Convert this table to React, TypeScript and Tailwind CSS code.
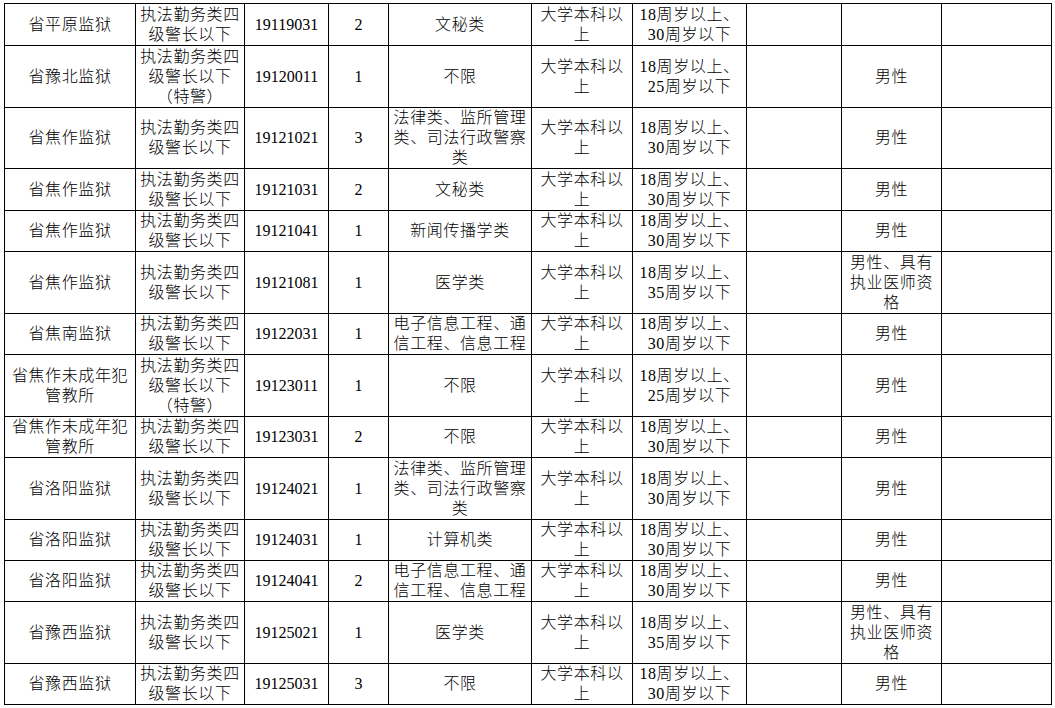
const WIDTHS = [131, 109, 84, 60, 143, 101, 114, 95, 100, 110];

const RANK = ['执法勤务类四', '级警长以下'];
const RANK_SP = ['执法勤务类四', '级警长以下', '（特警）'];
const EDU = ['大学本科以', '上'];
const AGE30 = ['18周岁以上、', '30周岁以下'];
const AGE25 = ['18周岁以上、', '25周岁以下'];
const AGE35 = ['18周岁以上、', '35周岁以下'];
const LAW = ['法律类、监所管理', '类、司法行政警察', '类'];
const ELEC = ['电子信息工程、通', '信工程、信息工程'];
const DOC = ['男性、具有', '执业医师资', '格'];
const MALE = ['男性'];

type Row = {
  h: string;
  unit: string[];
  rank: string[];
  code: string;
  count: string;
  major: string[];
  edu: string[];
  age: string[];
  note: string[];
};

const ROWS: Row[] = [
  { h: 'h-[42px]', unit: ['省平原监狱'], rank: RANK, code: '19119031', count: '2', major: ['文秘类'], edu: EDU, age: AGE30, note: [] },
  { h: 'h-[62px]', unit: ['省豫北监狱'], rank: RANK_SP, code: '19120011', count: '1', major: ['不限'], edu: EDU, age: AGE25, note: MALE },
  { h: 'h-[61px]', unit: ['省焦作监狱'], rank: RANK, code: '19121021', count: '3', major: LAW, edu: EDU, age: AGE30, note: MALE },
  { h: 'h-[42px]', unit: ['省焦作监狱'], rank: RANK, code: '19121031', count: '2', major: ['文秘类'], edu: EDU, age: AGE30, note: MALE },
  { h: 'h-[41px]', unit: ['省焦作监狱'], rank: RANK, code: '19121041', count: '1', major: ['新闻传播学类'], edu: EDU, age: AGE30, note: MALE },
  { h: 'h-[62px]', unit: ['省焦作监狱'], rank: RANK, code: '19121081', count: '1', major: ['医学类'], edu: EDU, age: AGE35, note: DOC },
  { h: 'h-[41px]', unit: ['省焦南监狱'], rank: RANK, code: '19122031', count: '1', major: ELEC, edu: EDU, age: AGE30, note: MALE },
  { h: 'h-[62px]', unit: ['省焦作未成年犯', '管教所'], rank: RANK_SP, code: '19123011', count: '1', major: ['不限'], edu: EDU, age: AGE25, note: MALE },
  { h: 'h-[41px]', unit: ['省焦作未成年犯', '管教所'], rank: RANK, code: '19123031', count: '2', major: ['不限'], edu: EDU, age: AGE30, note: MALE },
  { h: 'h-[62px]', unit: ['省洛阳监狱'], rank: RANK, code: '19124021', count: '1', major: LAW, edu: EDU, age: AGE30, note: MALE },
  { h: 'h-[41px]', unit: ['省洛阳监狱'], rank: RANK, code: '19124031', count: '1', major: ['计算机类'], edu: EDU, age: AGE30, note: MALE },
  { h: 'h-[41px]', unit: ['省洛阳监狱'], rank: RANK, code: '19124041', count: '2', major: ELEC, edu: EDU, age: AGE30, note: MALE },
  { h: 'h-[62px]', unit: ['省豫西监狱'], rank: RANK, code: '19125021', count: '1', major: ['医学类'], edu: EDU, age: AGE35, note: DOC },
  { h: 'h-[41px]', unit: ['省豫西监狱'], rank: RANK, code: '19125031', count: '3', major: ['不限'], edu: EDU, age: AGE30, note: MALE },
];

function Lines({ lines }: { lines: string[] }) {
  return (
    <>
      {lines.map((l, i) => (
        <span key={i} className="block whitespace-nowrap">{l}</span>
      ))}
    </>
  );
}

const cell = 'border border-black p-0 text-center align-middle';

export default function App() {
  return (
    <div className="bg-white w-[1055px] h-[708px] overflow-hidden pt-[3px] pl-[4px]">
      <table
        className="border-collapse table-fixed text-black text-[16px] leading-[20px] tracking-[0.6px] font-light font-['Liberation_Serif','Noto_Sans_CJK_SC',serif]"
        style={{ width: 1047 }}
      >
        <colgroup>
          {WIDTHS.map((w, i) => (
            <col key={i} style={{ width: w }} />
          ))}
        </colgroup>
        <tbody>
          {ROWS.map((r, i) => (
            <tr key={i} className={r.h}>
              <td className={cell}><Lines lines={r.unit} /></td>
              <td className={cell}><Lines lines={r.rank} /></td>
              <td className={`${cell} tracking-normal`}>{r.code}</td>
              <td className={`${cell} tracking-normal`}>{r.count}</td>
              <td className={cell}><Lines lines={r.major} /></td>
              <td className={cell}><Lines lines={r.edu} /></td>
              <td className={cell}><Lines lines={r.age} /></td>
              <td className={cell}></td>
              <td className={cell}><Lines lines={r.note} /></td>
              <td className={cell}></td>
            </tr>
          ))}
        </tbody>
      </table>
    </div>
  );
}
